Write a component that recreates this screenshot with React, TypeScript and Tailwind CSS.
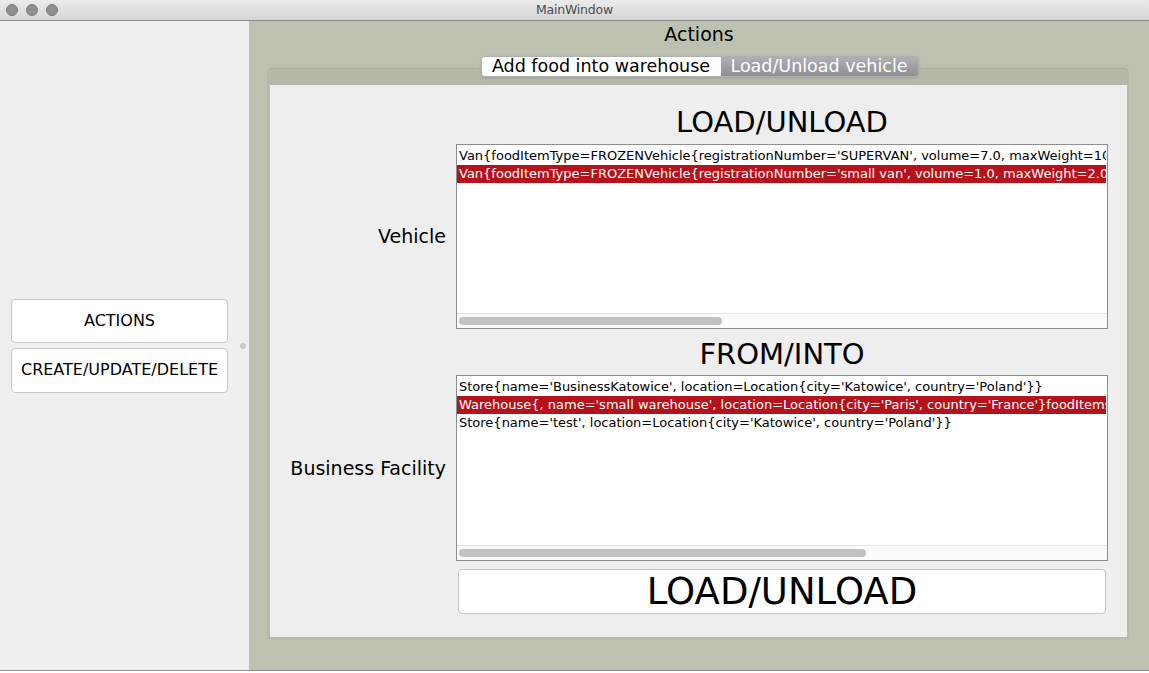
import React from "react";

const F = { fontFamily: '"DejaVu Sans", "Liberation Sans", sans-serif' };

const vehicles = [
  "Van{foodItemType=FROZENVehicle{registrationNumber='SUPERVAN', volume=7.0, maxWeight=10.0, currentWeight=0.0}}",
  "Van{foodItemType=FROZENVehicle{registrationNumber='small van', volume=1.0, maxWeight=2.0, currentWeight=0.0}}",
];

const facilities = [
  "Store{name='BusinessKatowice', location=Location{city='Katowice', country='Poland'}}",
  "Warehouse{, name='small warehouse', location=Location{city='Paris', country='France'}foodItems=[]}",
  "Store{name='test', location=Location{city='Katowice', country='Poland'}}",
];

function ListBox({ items, selected, thumb, h }: { items: string[]; selected: number; thumb: number; h: string }) {
  return (
    <div className={`flex flex-col border border-[#8e8e8e] bg-white min-w-0 ${h}`}>
      <div className="flex-1 overflow-hidden pt-[2px] pr-[1px] min-w-0">
        {items.map((t, i) => (
          <div
            key={i}
            className={`h-[18px] leading-[18px] whitespace-nowrap overflow-hidden pl-[2px] text-[13px] ${
              i === selected ? "bg-[#b5121b] text-white" : "text-black"
            }`}
          >
            {t}
          </div>
        ))}
      </div>
      <div className="h-[15px] border-t border-[#e6e6e6] bg-[#fafafa] flex items-center pl-[2px]">
        <div className="h-[8px] rounded-full bg-[#c2c2c2]" style={{ width: thumb }} />
      </div>
    </div>
  );
}

export default function App() {
  return (
    <div className="w-[1149px] h-[673px] flex flex-col bg-white overflow-hidden" style={F}>
      <div className="h-[21px] shrink-0 flex items-center relative bg-gradient-to-b from-[#ebebeb] to-[#d5d5d5] border-b border-[#8a8a8a]">
        <div className="flex gap-[8px] pl-[6px]">
          <div className="w-[12px] h-[12px] rounded-full bg-[#8f8e93] border border-[#7d7c81]" />
          <div className="w-[12px] h-[12px] rounded-full bg-[#8f8e93] border border-[#7d7c81]" />
          <div className="w-[12px] h-[12px] rounded-full bg-[#8f8e93] border border-[#7d7c81]" />
        </div>
        <div className="flex-1 text-center text-[12.5px] text-[#4d4d4d] pr-[58px] tracking-[-0.2px]">MainWindow</div>
      </div>

      <div className="h-[650px] shrink-0 flex border-b border-[#8e8e8e]">
        <div className="w-[249px] shrink-0 bg-[#efefef] flex items-center pl-[11px]">
          <div className="w-[217px] shrink-0 flex flex-col gap-[5px]">
            <button className="h-[44px] bg-white border border-[#c8c8c8] rounded-[4px] text-[16px] text-black">ACTIONS</button>
            <button className="h-[45px] bg-white border border-[#c8c8c8] rounded-[4px] text-[16px] text-black">CREATE/UPDATE/DELETE</button>
          </div>
          <div className="ml-[12px] w-[6px] h-[6px] shrink-0 rounded-full bg-[#c8c8c8]" />
        </div>

        <div className="flex-1 min-w-0 bg-[#bdc1b0] flex flex-col">
          <div className="h-[27px] leading-[27px] text-center text-[19px] text-black">Actions</div>
          <div className="mt-[8px] flex justify-center relative z-10 pl-[1px]">
            <div className="flex h-[21px] rounded-[4px] overflow-hidden border border-[#b0b0b0] shadow-sm">
              <div className="w-[239px] bg-white text-black text-[17.5px] leading-[19px] text-center">Add food into warehouse</div>
              <div className="w-[197px] bg-gradient-to-b from-[#b0b0b4] to-[#8f8f94] text-white text-[17.5px] leading-[19px] text-center">Load/Unload vehicle</div>
            </div>
          </div>
          <div className="-mt-[9px] ml-[18px] mr-[20px] h-[571px] rounded-t-[5px] bg-[#b5b9a8] border-t border-[#a9ad9c] pt-[16px] pl-[3px] pr-[2px] pb-[2px] flex min-w-0">
            <div className="flex-1 min-w-0 bg-[#eeeeee] flex flex-col">
              <div className="flex pt-[22px]">
                <div className="w-[186px] shrink-0" />
                <div className="flex-1 min-w-0 mr-[19px] h-[30px] leading-[30px] text-center text-[29px] text-black">LOAD/UNLOAD</div>
              </div>
              <div className="flex mt-[7px] items-center">
                <div className="w-[176px] shrink-0 text-right text-[19px] text-black">Vehicle</div>
                <div className="flex-1 min-w-0 ml-[10px] mr-[19px]">
                  <ListBox items={vehicles} selected={1} thumb={263} h="h-[185px]" />
                </div>
              </div>
              <div className="flex mt-[10px]">
                <div className="w-[186px] shrink-0" />
                <div className="flex-1 min-w-0 mr-[19px] h-[30px] leading-[30px] text-center text-[29px] text-black">FROM/INTO</div>
              </div>
              <div className="flex mt-[6px] items-center">
                <div className="w-[176px] shrink-0 text-right text-[19px] text-black whitespace-nowrap">Business Facility</div>
                <div className="flex-1 min-w-0 ml-[10px] mr-[19px]">
                  <ListBox items={facilities} selected={1} thumb={407} h="h-[186px]" />
                </div>
              </div>
              <div className="flex mt-[8px]">
                <div className="w-[188px] shrink-0" />
                <button className="flex-1 min-w-0 mr-[21px] h-[45px] bg-white border border-[#c4c4c4] rounded-[4px] text-[37px] text-black leading-[43px]">LOAD/UNLOAD</button>
              </div>
            </div>
          </div>
        </div>
      </div>
    </div>
  );
}
